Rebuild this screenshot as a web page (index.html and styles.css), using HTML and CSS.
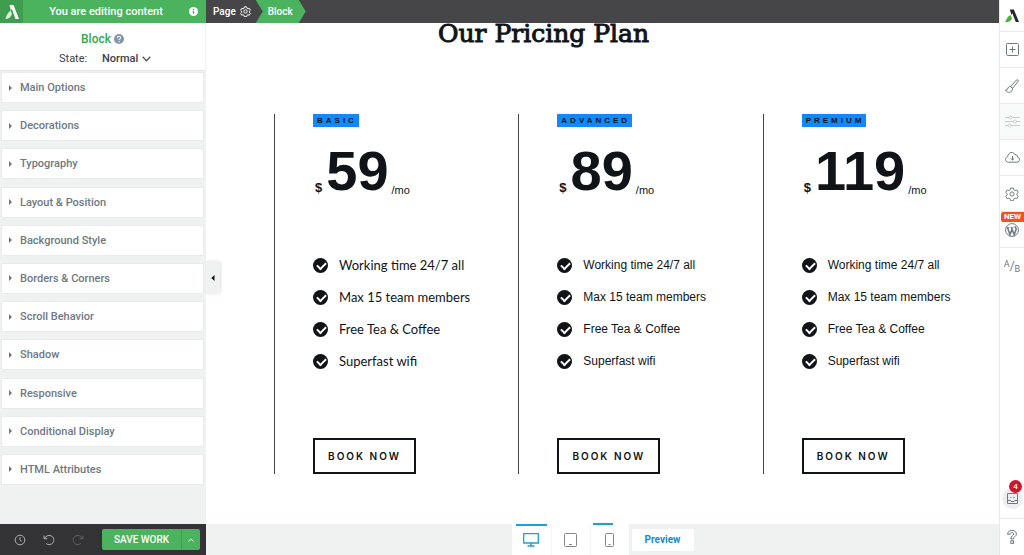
FILE: index.html
```html
<!DOCTYPE html>
<html lang="en">
<head>
    <meta charset="UTF-8">
    <meta name="viewport" content="width=device-width, initial-scale=1.0">
    <title>Our Pricing Plan</title>
    <link rel="stylesheet" href="styles.css">
</head>
<body>
    <aside class="sidebar">
        <div class="sidebar-top">
            <span class="logo">
                <svg width="14" height="16" viewBox="0 0 14 16"><path d="M4.5 1h4L14 15h-3.5L6.8 4.5 6 7z" fill="#fff"/><path d="M5.6 6.5 7 10C6 13 3.500 15 .5 15 1 11.500 3 8.500 5.600 6.500z" fill="#d3edd7"/></svg>
            </span>
            <span class="editing">You are editing content</span>
            <button class="info" aria-label="Info">
                <svg width="9" height="9" viewBox="0 0 9 9"><circle cx="4.500" cy="4.500" r="4.500" fill="#fff"/><path d="M4.500 1.700v1.300M4.500 3.800v3" stroke="#4bb35e" stroke-width="1.400"/></svg>
            </button>
        </div>

        <div class="element-head">
            <h2>Block
                <svg width="10" height="10" viewBox="0 0 9 9"><circle cx="4.500" cy="4.500" r="4.500" fill="#8496a5"/><path d="M3 3.600c0-2 3-2 3-.2 0 1-1.500 1-1.500 2M4.500 6.400v1" stroke="#fff" fill="none"/></svg>
            </h2>
            <div class="state">
                <label for="state">State:</label>
                <select id="state">
                    <option>Normal</option>
                    <option>Hover</option>
                </select>
                <svg width="9" height="6" viewBox="0 0 9 6"><path d="M.7.800 4.500 4.800 8.300.8" stroke="#50565f" stroke-width="1.300" fill="none"/></svg>
            </div>
        </div>

        <nav class="panels">
            <button class="panel">Main Options</button>
            <button class="panel">Decorations</button>
            <button class="panel">Typography</button>
            <button class="panel">Layout &amp; Position</button>
            <button class="panel">Background Style</button>
            <button class="panel">Borders &amp; Corners</button>
            <button class="panel">Scroll Behavior</button>
            <button class="panel">Shadow</button>
            <button class="panel">Responsive</button>
            <button class="panel">Conditional Display</button>
            <button class="panel">HTML Attributes</button>
        </nav>

        <div class="sidebar-footer">
            <button class="tool" aria-label="Revisions">
                <svg width="12" height="12" viewBox="0 0 12 12"><circle cx="6" cy="6" r="4.800"/><path d="M6 3.200V6.300l1.600 1"/></svg>
            </button>
            <button class="tool" aria-label="Undo">
                <svg width="12" height="12" viewBox="0 0 12 12"><path d="M1 1.500v3.200h3.300M1.300 4.600C2.500 2 5.500.8 8 1.800c2.800 1.100 3.700 4.500 2 6.900-1.600 2.200-4.700 2.500-6.800.9"/></svg>
            </button>
            <button class="tool dim" aria-label="Redo">
                <svg width="12" height="12" viewBox="0 0 12 12"><path d="M11 1.500v3.200H7.700M10.700 4.600C9.500 2 6.500.8 4 1.800 1.200 2.900.3 6.300 2 8.700c1.600 2.200 4.700 2.500 6.800.9"/></svg>
            </button>
            <div class="save">
                <button class="save-main">SAVE WORK</button>
                <button class="save-more" aria-label="More save options">
                    <svg width="6" height="4" viewBox="0 0 6 4"><path d="M.5 3.300 3 1l2.500 2.300" stroke="#fff" fill="none"/></svg>
                </button>
            </div>
        </div>

        <button class="collapse" aria-label="Collapse sidebar">
            <svg width="4" height="6" viewBox="0 0 4 6"><path d="M3.500 0v6L.3 3z" fill="#111"/></svg>
        </button>
    </aside>

    <main class="main">
        <div class="breadcrumbs">
            <button class="crumb">Page
                <svg width="11" height="11" viewBox="0 0 20 20" fill="none" stroke="#fff" stroke-width="1.800"><circle cx="10" cy="10" r="3"/><path d="M8 1.500h4l.6 2.600 1.800 1 2.500-.8 2 3.400-1.900 1.800v2l1.900 1.800-2 3.400-2.500-.8-1.800 1-.6 2.600H8l-.6-2.600-1.800-1-2.500.8-2-3.400L3 11.500v-2L1.100 7.700l2-3.400 2.500.8 1.800-1z"/></svg>
            </button>
            <button class="crumb active">Block</button>
        </div>

        <div class="canvas">
            <h1>Our Pricing Plan</h1>

            <div class="plans">
                <section class="plan first">
                    <span class="tag">BASIC</span>
                    <p class="price"><b>$</b><strong>59</strong><span>/mo</span></p>
                    <ul>
                        <li>Working time 24/7 all</li>
                        <li>Max 15 team members</li>
                        <li>Free Tea &amp; Coffee</li>
                        <li>Superfast wifi</li>
                    </ul>
                    <button class="book">BOOK NOW</button>
                </section>
                <section class="plan">
                    <span class="tag">ADVANCED</span>
                    <p class="price"><b>$</b><strong>89</strong><span>/mo</span></p>
                    <ul>
                        <li>Working time 24/7 all</li>
                        <li>Max 15 team members</li>
                        <li>Free Tea &amp; Coffee</li>
                        <li>Superfast wifi</li>
                    </ul>
                    <button class="book">BOOK NOW</button>
                </section>
                <section class="plan">
                    <span class="tag">PREMIUM</span>
                    <p class="price"><b>$</b><strong>119</strong><span>/mo</span></p>
                    <ul>
                        <li>Working time 24/7 all</li>
                        <li>Max 15 team members</li>
                        <li>Free Tea &amp; Coffee</li>
                        <li>Superfast wifi</li>
                    </ul>
                    <button class="book">BOOK NOW</button>
                </section>
            </div>
        </div>

        <div class="bottom-bar">
            <div class="devices">
                <button class="device current" aria-label="Desktop">
                    <svg width="16" height="14" viewBox="0 0 16 14" fill="none" stroke="#1ba0d8"><path d="M.7.700h14.600v9.300H.7z" stroke-width="1.300"/><path d="M8 10v2.500M4.500 13h7" stroke-width="1.500"/></svg>
                </button>
                <button class="device" aria-label="Tablet">
                    <svg width="13" height="14" viewBox="0 0 13 14" fill="none" stroke="#858585"><rect x=".5" y=".5" width="12" height="13" rx="1"/><path d="M5 11.500h3"/></svg>
                </button>
                <button class="device edited" aria-label="Mobile">
                    <svg width="9" height="14" viewBox="0 0 9 14" fill="none" stroke="#858585"><rect x=".5" y=".5" width="8" height="13" rx="1"/><path d="M3.500 11.500h2"/></svg>
                </button>
            </div>
            <button class="preview">Preview</button>
        </div>
    </main>

    <aside class="rail">
        <button class="rail-item brand" aria-label="Home">
            <svg width="14" height="14" viewBox="0 0 14 14"><path d="M4.800.5h4L14 13h-3.200L7.300 4.200 6.500 6z" fill="#26292c"/><path d="M5.500 6 7 9.500C6 12 4 13.300.3 13.300 1 9.800 3 7.500 5.500 6z" fill="#4bb035"/></svg>
        </button>
        <button class="rail-item" aria-label="Add element">
            <svg width="13" height="13" viewBox="0 0 13 13"><rect x=".5" y=".5" width="12" height="12" rx="1"/><path d="M6.500 3.500v6M3.500 6.500h6"/></svg>
        </button>
        <button class="rail-item" aria-label="Styles">
            <svg width="14" height="14" viewBox="0 0 14 14"><path d="M5.500 7.500 11.500 1c1-.8 2.300.4 1.600 1.400L7.500 9.300zM5.500 7.500C3.800 7.300 2.800 8.500 2.700 10c-.1.800-1 1-2.200.9C1.500 13 3 13.500 4.500 13.300c2-.3 3.200-2 3-4z"/></svg>
        </button>
        <button class="rail-item muted" aria-label="Settings list">
            <svg width="15" height="13" viewBox="0 0 15 13"><path d="M0 2.500h4M7 2.500h8M0 6.500h8.500M11.500 6.500H15M0 10.500h3M6 10.500h9"/><circle cx="5.500" cy="2.500" r="1.500"/><circle cx="10" cy="6.500" r="1.500"/><circle cx="4.500" cy="10.500" r="1.500"/></svg>
        </button>
        <button class="rail-item" aria-label="Cloud templates">
            <svg width="15" height="11" viewBox="0 0 15 11"><path d="M3.500 10.200C-.3 10.200-.3 5.200 2.700 4.700 2.800 0 8.500-.8 10 2.800c1.700-.4 2.700.7 2.500 2.300 2.800.6 2.600 5.100-.5 5.100zM7.500 4v4M5.700 6.300 7.500 8l1.800-1.700"/></svg>
        </button>
        <button class="rail-item" aria-label="Settings">
            <svg width="14" height="14" viewBox="0 0 20 20"><g stroke-width="1.400"><circle cx="10" cy="10" r="3"/><path d="M8 1.500h4l.6 2.600 1.800 1 2.500-.8 2 3.400-1.900 1.800v2l1.900 1.800-2 3.400-2.500-.8-1.800 1-.6 2.600H8l-.6-2.600-1.800-1-2.500.8-2-3.400L3 11.500v-2L1.100 7.700l2-3.400 2.500.8 1.800-1z"/></g></svg>
        </button>
        <button class="rail-item" aria-label="WordPress">
            <span class="new">NEW</span>
            <svg width="14" height="14" viewBox="0 0 14 14"><circle cx="7" cy="7" r="6.400"/><path d="M1.500 4.500h2.700M5.500 4.500h3" stroke-width=".8"/><path d="M2.500 4.600 5 11.800 7 6 6.400 4.500M7 6l2.200 5.800 1.900-5.300c.3-1.500-1.200-2-.9-3.300" stroke-width="1.500"/></svg>
        </button>
        <button class="rail-item last ab" aria-label="A/B test"><span class="a">A</span>/<span class="b">B</span></button>

        <button class="rail-item inbox" aria-label="Notifications">
            <span class="count">4</span>
            <span class="inbox-icon">
                <svg width="11" height="11" viewBox="0 0 11 11"><path d="M.5.500h10v10H.5zM.5 7.500h3l.6 1h2.800l.6-1h3"/><path d="M3 4.500h1.500M6 4.500h2" stroke-width=".6"/></svg>
            </span>
        </button>
        <button class="rail-item last" aria-label="Help">
            <svg width="10" height="14" viewBox="0 0 10 14"><path d="M.6 4.200C.6-.8 9.400-.8 9.400 4c0 2.500-3 2.700-3 5H3.800c0-3.300 2.900-3.300 2.900-5 0-1.800-3.400-1.800-3.400.2z"/><rect x="3.800" y="10.800" width="2.600" height="2.600"/></svg>
        </button>
    </aside>
</body>
</html>
```
FILE: styles.css
```css
* {
    box-sizing: border-box;
}

body {
    margin: 0;
    height: 100vh;
    display: grid;
    grid-template-columns: 206px 1fr 25px;
    font-family: Roboto, 'Liberation Sans', sans-serif;
    font-size: 11px;
    font-weight: 500;
    color: #3c4148;
    background: #fff;
    overflow: hidden;
}

button,
select {
    font: inherit;
    color: inherit;
    background: none;
    border: none;
    padding: 0;
    margin: 0;
    cursor: pointer;
}

svg {
    flex: none;
}

/* Sidebar */
.sidebar {
    position: relative;
    display: flex;
    flex-direction: column;
    background: #f0f2f2;
}

.sidebar-top {
    display: flex;
    align-items: center;
    height: 23px;
    background: #4bb35e;
    color: #fff;
}

.logo {
    display: flex;
    align-items: center;
    justify-content: center;
    width: 23px;
    height: 23px;
    background: #3f9d50;
}

.editing {
    flex: 1;
    text-align: center;
}

.info {
    display: flex;
    padding-right: 8px;
}

.element-head {
    height: 48px;
    margin-right: 1px;
    padding-top: 8px;
    background: #fff;
    border-bottom: 1px solid #e2e4e4;
}

.element-head h2 {
    display: flex;
    align-items: center;
    justify-content: center;
    gap: 3px;
    margin: 0 0 5px;
    font-size: 12px;
    line-height: 16px;
    font-weight: 500;
    color: #34a84c;
}

.state {
    display: flex;
    align-items: center;
    padding-left: 59px;
    line-height: 14px;
}

.state label {
    width: 43px;
    font-weight: 400;
}

.state select {
    appearance: none;
    width: 40px;
}

.panels {
    flex: 1;
    display: flex;
    flex-direction: column;
    justify-content: space-between;
    padding: 1px 2px 39px 1px;
}

.panel {
    display: flex;
    align-items: center;
    gap: 8px;
    height: 31px;
    padding-left: 7px;
    background: #fff;
    border: 1px solid #e9ebeb;
    border-radius: 2px;
    color: #6f7982;
}

.panel::before {
    content: "";
    border-left: 3px solid #6f7982;
    border-top: 3px solid transparent;
    border-bottom: 3px solid transparent;
}

.sidebar-footer {
    display: flex;
    align-items: center;
    height: 31px;
    padding: 0 6px 0 5px;
    background: #333336;
}

.tool {
    display: flex;
    justify-content: center;
    width: 29px;
}

.tool svg {
    fill: none;
    stroke: #b0b1b3;
}

.dim svg {
    stroke: #5f6063;
}

.save {
    display: flex;
    flex: 1;
    height: 21px;
    margin-left: 10px;
    background: #4bb35e;
    border-radius: 2px;
    color: #fff;
    font-size: 10px;
}

.save-main {
    flex: 1;
}

.save-more {
    display: flex;
    align-items: center;
    justify-content: center;
    width: 19px;
    border-left: 1px solid #419f52;
}

.collapse {
    position: absolute;
    z-index: 2;
    left: 100%;
    top: 261px;
    display: flex;
    align-items: center;
    justify-content: center;
    width: 14px;
    height: 33px;
    background: #f0f2f2;
    border-radius: 0 4px 4px 0;
    box-shadow: 1px 0 3px rgba(0, 0, 0, 0.12);
}

/* Editor area */
.main {
    display: flex;
    flex-direction: column;
    min-width: 0;
    height: 100vh;
}

.breadcrumbs {
    display: flex;
    flex: none;
    height: 23px;
    background: #464648;
    color: #fff;
    font-size: 10px;
}

.crumb {
    display: flex;
    align-items: center;
    gap: 4px;
    padding: 0 5px 0 7px;
}

.crumb.active {
    padding: 0 13px 0 12px;
    background: #4bb35e;
    clip-path: polygon(0 0, calc(100% - 7px) 0, 100% 50%, calc(100% - 7px) 100%, 0 100%, 7px 50%);
}

.canvas {
    flex: 1;
    min-height: 0;
    font-family: 'Liberation Sans', Arial, sans-serif;
    color: #101418;
}

.canvas h1 {
    margin: 0;
    padding-right: 118px;
    font-family: 'DejaVu Serif', serif;
    font-size: 25px;
    line-height: 22px;
    font-weight: 400;
    text-align: center;
    -webkit-text-stroke: 1px #101418;
}

.plans {
    display: grid;
    grid-template-columns: 244fr 244fr 236fr;
    padding: 69px 0 0 68px;
}

.plan {
    display: flex;
    flex-direction: column;
    align-items: flex-start;
    height: 360px;
    padding-left: 38px;
    border-left: 1px solid #444;
}

.tag {
    padding: 0 2px 0 4px;
    background: #1288ff;
    font-size: 8px;
    line-height: 13px;
    font-weight: 700;
    letter-spacing: 3px;
}

.price {
    display: flex;
    align-items: flex-end;
    margin: 12px 0 0 2px;
    font-size: 11px;
    line-height: 26px;
    font-weight: 400;
}

.price b {
    font-size: 13px;
    line-height: 30px;
}

.price strong {
    margin: 0 3px 0 4px;
    font-size: 56px;
    line-height: 64px;
}

.plan ul {
    list-style: none;
    margin: 46px 0 0;
    padding: 0;
    font-size: 12px;
    font-weight: 400;
}

.plan li {
    position: relative;
    display: flex;
    align-items: center;
    gap: 11px;
    height: 32px;
}

.plan li::before {
    content: "";
    width: 15px;
    height: 15px;
    border-radius: 50%;
    background: #101418;
}

/* tick inside the round bullet */
.plan li::after {
    content: "";
    position: absolute;
    left: 4px;
    top: 13px;
    width: 7px;
    height: 4px;
    border-left: 2px solid #fff;
    border-bottom: 2px solid #fff;
    transform: rotate(-45deg);
}

.plan.first ul {
    font-family: Lato, sans-serif;
    font-size: 13px;
}

.book {
    margin-top: auto;
    width: 103px;
    height: 36px;
    border: 2px solid #101418;
    font-family: Inter, sans-serif;
    font-size: 10px;
    font-weight: 600;
    letter-spacing: 2px;
}

.bottom-bar {
    display: flex;
    flex: none;
    align-items: center;
    justify-content: center;
    gap: 3px;
    height: 31px;
    background: #f0f2f2;
}

.devices {
    display: flex;
    height: 31px;
    background: #fff;
}

.device {
    position: relative;
    display: flex;
    align-items: center;
    justify-content: center;
    width: 39px;
}

.device + .device {
    border-left: 1px solid #f4f5f5;
}

/* blue marker over the active and the edited device */
.current::before,
.edited::before {
    content: "";
    position: absolute;
    top: 0;
    left: 4px;
    right: 4px;
    height: 2px;
    background: #1ba0d8;
}

.edited::before {
    top: -1px;
    left: 2px;
    right: 16px;
}

.preview {
    width: 62px;
    height: 22px;
    background: #fff;
    border-radius: 2px;
    color: #178bd3;
    font-size: 10px;
    font-weight: 700;
}

/* Right rail */
.rail {
    display: flex;
    flex-direction: column;
    background: #fff;
    border-left: 1px solid #e8eaea;
}

.rail-item {
    position: relative;
    display: flex;
    align-items: center;
    justify-content: center;
    height: 36px;
    border-bottom: 1px solid #e8eaea;
}

.rail-item svg {
    fill: none;
    stroke: #6f7982;
}

.rail .brand {
    height: 32px;
}

.brand svg {
    stroke: none;
}

.muted {
    background: #f8f9f9;
}

.rail .muted svg {
    stroke: #c9cdd0;
}

.last {
    border-bottom: none;
}

.new {
    position: absolute;
    top: 0;
    left: 1px;
    right: 0;
    background: #f4511e;
    border-radius: 2px 0 0 2px;
    color: #fff;
    font-size: 8px;
    line-height: 10px;
    font-weight: 700;
}

.ab {
    font-size: 12px;
    font-weight: 400;
    color: #6f7982;
}

.a,
.b {
    font-size: 9px;
}

.a {
    padding-bottom: 5px;
}

.b {
    padding-top: 5px;
}

.rail .inbox {
    margin-top: auto;
    height: 40px;
}

.inbox-icon {
    display: flex;
    align-items: center;
    justify-content: center;
    width: 21px;
    height: 21px;
    background: #eceeef;
    border-radius: 50%;
}

.count {
    position: absolute;
    z-index: 1;
    top: 1px;
    right: 2px;
    width: 13px;
    height: 13px;
    background: #d0162f;
    border-radius: 50%;
    color: #fff;
    font-size: 8px;
    line-height: 13px;
}
```
